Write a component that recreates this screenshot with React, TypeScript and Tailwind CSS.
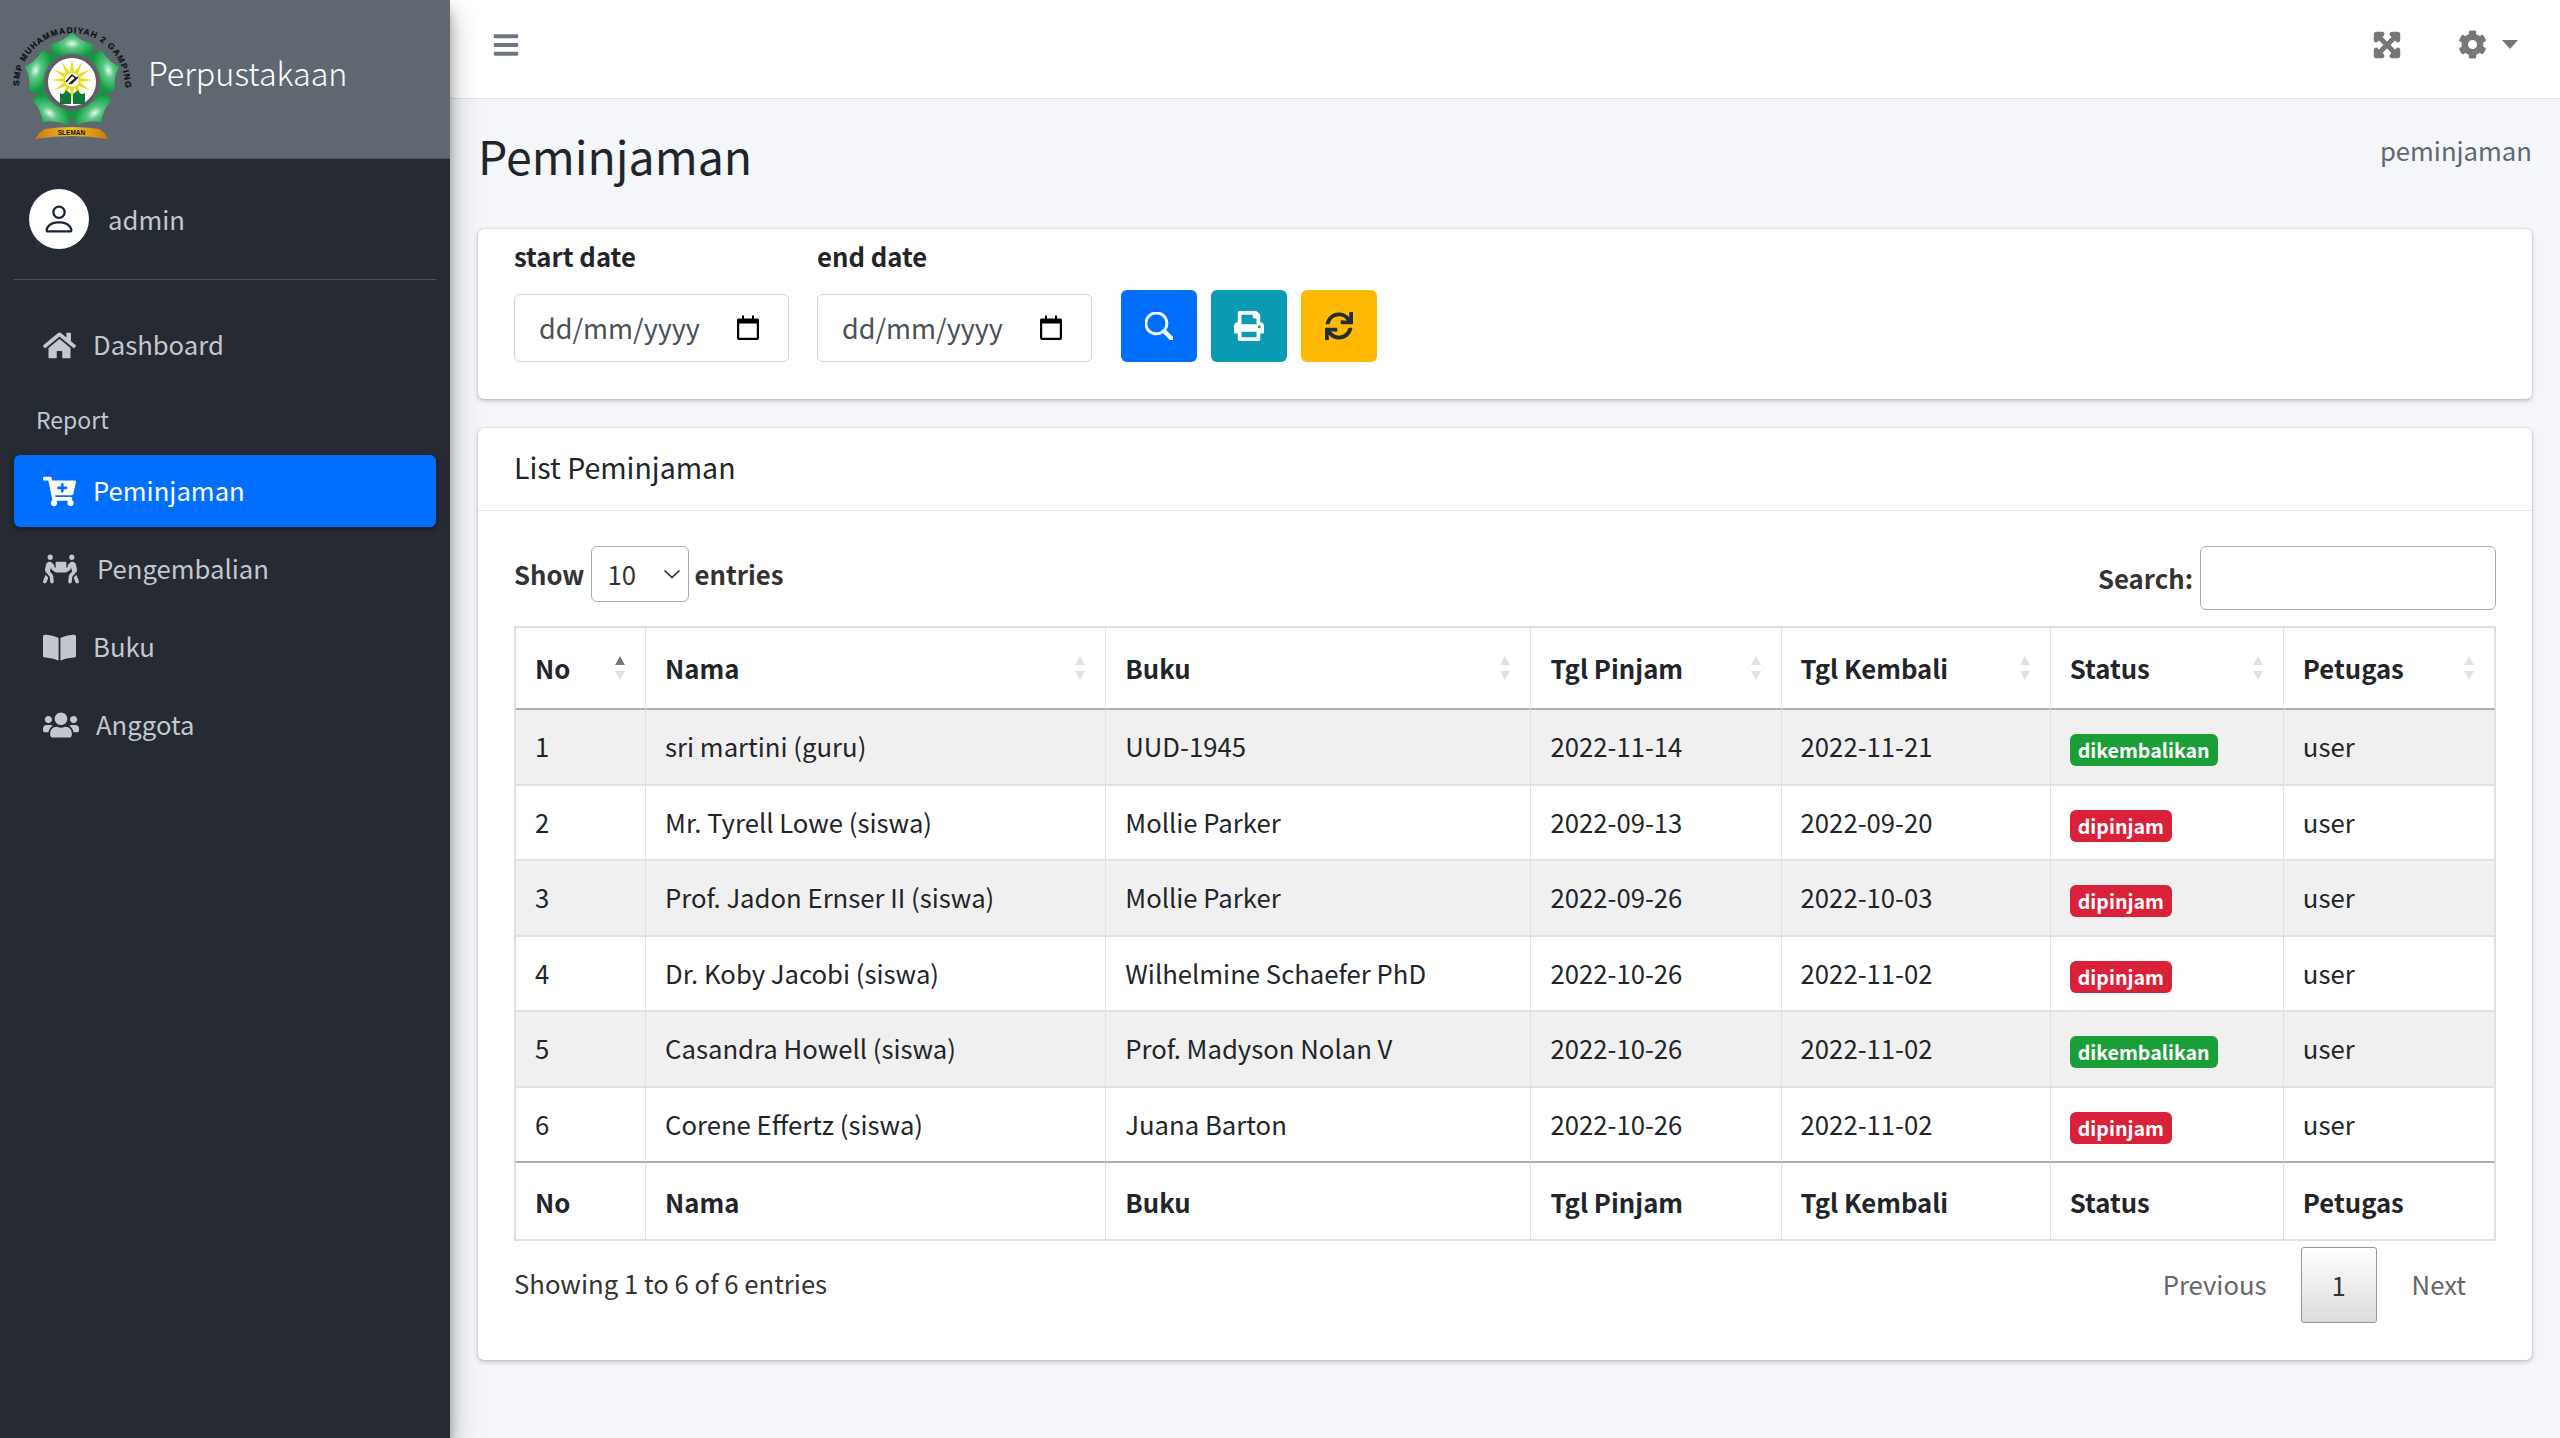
import React from 'react';
import { FaHome, FaCartPlus, FaPeopleCarry, FaBookOpen, FaUsers, FaExpandArrowsAlt, FaCog, FaBars, FaPrint, FaSync } from 'react-icons/fa';
import { BsPerson, BsSearch } from 'react-icons/bs';

const sun = (() => {
  const pts: string[] = [];
  for (let i = 0; i < 24; i++) {
    const r = i % 2 === 0 ? 21 : 8;
    const a = (i * Math.PI) / 12 - Math.PI / 2;
    pts.push(`${(72 + r * Math.cos(a)).toFixed(1)},${(76 + r * Math.sin(a)).toFixed(1)}`);
  }
  return pts.join(' ');
})();

function Logo() {
  return (
    <svg width="150" height="150" viewBox="0 0 150 150" className="shrink-0">
      <defs>
        <radialGradient id="petal" cx="50%" cy="45%" r="55%">
          <stop offset="0%" stopColor="#e6f8ec" />
          <stop offset="35%" stopColor="#5ac884" />
          <stop offset="100%" stopColor="#0b9a3c" />
        </radialGradient>
        <linearGradient id="gold" x1="0" x2="1" y1="0" y2="0">
          <stop offset="0%" stopColor="#c97a08" />
          <stop offset="50%" stopColor="#f3c02a" />
          <stop offset="100%" stopColor="#c97a08" />
        </linearGradient>
        <path id="arc" d="M19 82 A53 53 0 0 1 125 82" />
      </defs>
      {[0, 72, 144, 216, 288].map((a) => (
        <path key={a} transform={`rotate(${a} 72 78)`} fill="url(#petal)" d="M72 28 Q79 37 93 40 Q95 49 88 54 Q72 45 56 54 Q49 49 51 40 Q65 37 72 28Z" />
      ))}
      <circle cx="72" cy="78" r="27" fill="#5d5d5d" />
      <circle cx="72" cy="78" r="24" fill="#ffffff" />
      <polygon points={sun} fill="#e8dc1e" />
      <circle cx="72" cy="76" r="7" fill="#ffffff" />
      <path d="M66 78 L72 71 L76 74 L69 80 M71 80 L78 73" stroke="#222222" strokeWidth="1.6" fill="none" />
      <path d="M60 100 V89 Q64 92 66 86 L71 90 V100Z M73 100 V90 L78 86 Q80 92 85 89 V100Z" fill="#0f7a3c" />
      <path d="M35 135 Q40 127 45 125 Q72 121 99 125 Q104 127 108 135 Q72 129 35 135Z" fill="url(#gold)" />
      <text x="71.5" y="131" textAnchor="middle" fontSize="6.5" fontWeight="700" fill="#111111" fontFamily="Liberation Sans, sans-serif">SLEMAN</text>
      <text fontSize="8.4" fontWeight="700" fill="#111111" stroke="#111111" strokeWidth="0.25" fontFamily="Liberation Sans, sans-serif">
        <textPath href="#arc" textLength="168" lengthAdjust="spacing">SMP MUHAMMADIYAH 2 GAMPING</textPath>
      </text>
    </svg>
  );
}

function Calendar() {
  return (
    <svg width="22" height="25" viewBox="0 0 22 25" className="shrink-0">
      <path d="M1.5 3.5 H5 V0.5 H7 V3.5 H15 V0.5 H17 V3.5 H20.5 A1.5 1.5 0 0 1 22 5 V23 A2 2 0 0 1 20 25 H2 A2 2 0 0 1 0 23 V5 A1.5 1.5 0 0 1 1.5 3.5Z M2.2 8.5 V22.8 H19.8 V8.5Z" fill="#000000" fillRule="evenodd" />
    </svg>
  );
}

function DateField() {
  return (
    <div className="h-[68px] w-[275px] flex items-center justify-between pl-[24px] pr-[29px] pb-[2px] bg-white border border-[#ced4da] rounded-[6px] text-[#495057] text-[27px] leading-none">
      <span>dd/mm/yyyy</span>
      <Calendar />
    </div>
  );
}

function NavItem({ icon, label, gap = 'w-[50px]', active = false }: { icon: React.ReactNode; label: string; gap?: string; active?: boolean }) {
  return (
    <a className={`flex items-center h-[72px] pl-[29px] rounded-[6px] mx-[14px] ${active ? 'bg-[#006fff] text-white shadow-[0_2px_5px_rgba(0,0,0,0.4)]' : 'text-[#c2c7d0]'}`}>
      <span className={`${gap} shrink-0 flex items-center`}>{icon}</span>
      <span className="text-[25.7px] leading-none pb-[3px]">{label}</span>
    </a>
  );
}

function Sort({ active = false }: { active?: boolean }) {
  return (
    <span className="absolute right-[20px] top-[28px] flex flex-col gap-[6px]">
      <span className={`w-0 h-0 border-l-[5px] border-r-[5px] border-b-[9px] border-l-transparent border-r-transparent ${active ? 'border-b-[#777777]' : 'border-b-[#e2e2e2]'}`} />
      <span className="w-0 h-0 border-l-[5px] border-r-[5px] border-t-[9px] border-l-transparent border-r-transparent border-t-[#e2e2e2]" />
    </span>
  );
}

const heads = ['No', 'Nama', 'Buku', 'Tgl Pinjam', 'Tgl Kembali', 'Status', 'Petugas'];
const rows = [
  ['1', 'sri martini (guru)', 'UUD-1945', '2022-11-14', '2022-11-21', 'dikembalikan'],
  ['2', 'Mr. Tyrell Lowe (siswa)', 'Mollie Parker', '2022-09-13', '2022-09-20', 'dipinjam'],
  ['3', 'Prof. Jadon Ernser II (siswa)', 'Mollie Parker', '2022-09-26', '2022-10-03', 'dipinjam'],
  ['4', 'Dr. Koby Jacobi (siswa)', 'Wilhelmine Schaefer PhD', '2022-10-26', '2022-11-02', 'dipinjam'],
  ['5', 'Casandra Howell (siswa)', 'Prof. Madyson Nolan V', '2022-10-26', '2022-11-02', 'dikembalikan'],
  ['6', 'Corene Effertz (siswa)', 'Juana Barton', '2022-10-26', '2022-11-02', 'dipinjam'],
];

export default function App() {
  return (
    <div className="flex min-h-screen bg-[#f4f6f9] text-[#212529] font-['Noto_Sans_CJK_SC',sans-serif] overflow-hidden">
      <aside className="w-[450px] shrink-0 bg-[#262a32] shadow-[0_14px_28px_rgba(0,0,0,0.3),0_10px_10px_rgba(0,0,0,0.25)] z-10">
        <div className="h-[159px] bg-[#5f6871] border-b border-[#4b545c] flex items-center overflow-hidden">
          <Logo />
          <span className="text-[32.3px] leading-none font-light text-white -ml-[2px] mt-[-14px]">Perpustakaan</span>
        </div>
        <div className="mx-[14px] h-[121px] border-b border-[#4b545c] flex items-center pl-[15px]">
          <span className="w-[60px] h-[60px] rounded-full bg-white flex items-center justify-center text-[#14233a]">
            <BsPerson size={36} />
          </span>
          <span className="ml-[19px] text-[25.7px] leading-none text-[#c2c7d0]">admin</span>
        </div>
        <nav className="pt-[29px]">
          <NavItem icon={<FaHome size={33} />} label="Dashboard" />
          <div className="h-[54px] mt-[11px] pl-[36px] flex items-center text-[23px] leading-none text-[#c2c7d0]">Report</div>
          <div className="mt-[9px] flex flex-col gap-[6px]">
            <NavItem active icon={<FaCartPlus size={33} />} label="Peminjaman" />
            <NavItem gap="w-[54px]" icon={<FaPeopleCarry size={36} />} label="Pengembalian" />
            <NavItem icon={<FaBookOpen size={33} />} label="Buku" />
            <NavItem gap="w-[53px]" icon={<FaUsers size={36} />} label="Anggota" />
          </div>
        </nav>
      </aside>

      <main className="flex-1 min-w-0">
        <header className="h-[99px] bg-white border-b border-[#dee2e6] flex items-center justify-between pb-[9px] pl-[42px] pr-[42px] text-[#777777]">
          <FaBars size={28} className="text-[#6c757d]" />
          <div className="flex items-center">
            <FaExpandArrowsAlt size={28} stroke="currentColor" strokeWidth={35} />
            <FaCog size={29} className="ml-[57px]" />
            <span className="ml-[15px] w-0 h-0 border-l-[8px] border-r-[8px] border-t-[9px] border-l-transparent border-r-transparent border-t-[#777777]" />
          </div>
        </header>

        <div className="px-[28px] pt-[24px]">
          <div className="flex items-start justify-between h-[106px]">
            <h1 className="text-[46.4px] leading-[64px] font-normal">Peminjaman</h1>
            <span className="text-[25.7px] leading-[54px] text-[#5f6871]">peminjaman</span>
          </div>

          <section className="h-[170px] bg-white rounded-[6px] shadow-[0_0_2px_rgba(0,0,0,0.2),0_2px_5px_rgba(0,0,0,0.2)] px-[36px] flex items-start gap-[28px]">
            <div>
              <div className="pt-[10px] h-[65px] text-[25.7px] leading-[34px] font-bold">start date</div>
              <DateField />
            </div>
            <div>
              <div className="pt-[10px] h-[65px] text-[25.7px] leading-[34px] font-bold">end date</div>
              <DateField />
            </div>
            <div className="mt-[61px] ml-[1px] flex gap-[14px]">
              <button className="w-[76px] h-[72px] rounded-[6px] bg-[#006fff] text-white flex items-center justify-center"><BsSearch size={28} strokeWidth={0.6} stroke="currentColor" /></button>
              <button className="w-[76px] h-[72px] rounded-[6px] bg-[#0a9ab3] text-white flex items-center justify-center"><FaPrint size={30} /></button>
              <button className="w-[76px] h-[72px] rounded-[6px] bg-[#ffb900] text-[#1f2d3d] flex items-center justify-center"><FaSync size={28} /></button>
            </div>
          </section>

          <section className="mt-[29px] h-[932px] bg-white rounded-[6px] shadow-[0_0_2px_rgba(0,0,0,0.2),0_2px_5px_rgba(0,0,0,0.2)]">
            <div className="h-[83px] pb-[3px] border-b border-[#e3e6ea] px-[36px] flex items-center text-[28.5px] leading-none">List Peminjaman</div>
            <div className="px-[36px]">
              <div className="h-[115px] flex justify-between pt-[35px] font-bold text-[#333333] text-[25.7px] leading-none">
                <div className="h-[56px] flex items-center">
                  <span>Show</span>
                  <div className="relative mx-[6px]">
                    <select className="block appearance-none w-[98px] h-[56px] pl-[16px] bg-white border border-[#aaaaaa] rounded-[6px] font-normal text-[25.7px]" defaultValue="10">
                      <option value="10">10</option>
                    </select>
                    <svg width="18" height="10" viewBox="0 0 18 10" className="absolute right-[8px] top-[23px] pointer-events-none" fill="none" stroke="#222222" strokeWidth="1.6"><path d="M1.5 1.5 L9 8.5 L16.5 1.5" /></svg>
                  </div>
                  <span>entries</span>
                </div>
                <div className="h-[64px] flex items-center">
                  <span>Search:</span>
                  <input className="ml-[7px] w-[296px] h-[64px] bg-white border border-[#aaaaaa] rounded-[6px]" />
                </div>
              </div>
              <table className="w-full table-fixed border-separate border-spacing-0 border border-[#dee2e6] text-[25.7px]">
                <colgroup>
                  <col className="w-[131px]" /><col className="w-[460px]" /><col className="w-[425px]" /><col className="w-[250px]" /><col className="w-[269px]" /><col className="w-[233px]" /><col className="w-[211px]" />
                </colgroup>
                <thead>
                  <tr>
                    {heads.map((h, i) => (
                      <th key={h} className={`relative h-[83px] pl-[19px] text-left font-bold border-[#dee2e6] border-t border-r border-b-2 border-b-[#a9afb5] ${i === 0 ? 'border-l' : ''}`}>
                        {h}
                        <Sort active={i === 0} />
                      </th>
                    ))}
                  </tr>
                </thead>
                <tbody>
                  {rows.map((r, ri) => (
                    <tr key={r[0]} className={ri % 2 === 0 ? 'bg-[#f0f0f0]' : 'bg-white'}>
                      {r.map((c, i) => (
                        <td key={i} className={`h-[75.5px] pl-[19px] border-[#dee2e6] border-r ${ri === rows.length - 1 ? 'border-b-2 border-b-[#a9afb5]' : 'border-b-2'} ${i === 0 ? 'border-l' : ''}`}>
                          {i === 5 ? (
                            <span className={`inline-flex items-center h-[32px] px-[8px] rounded-[6px] text-white font-bold text-[19.6px] leading-none align-middle ${c === 'dipinjam' ? 'bg-[#d9223a]' : 'bg-[#1a9e38]'}`}>{c}</span>
                          ) : c}
                        </td>
                      ))}
                      <td className={`h-[75.5px] pl-[19px] border-[#dee2e6] border-r ${ri === rows.length - 1 ? 'border-b-2 border-b-[#a9afb5]' : 'border-b-2'}`}>user</td>
                    </tr>
                  ))}
                </tbody>
                <tfoot>
                  <tr>
                    {heads.map((h, i) => (
                      <th key={h} className={`h-[77px] pl-[19px] pt-[3px] text-left font-bold border-[#dee2e6] border-r border-b ${i === 0 ? 'border-l' : ''}`}>{h}</th>
                    ))}
                  </tr>
                </tfoot>
              </table>
              <div className="flex justify-between mt-[6px]">
                <div className="mt-[6px] h-[60px] flex items-center text-[25.7px] leading-none text-[#333333]">Showing 1 to 6 of 6 entries</div>
                <div className="flex items-center text-[25.7px] leading-none text-[#666666] pr-[30px]">
                  <span className="pb-[2px]">Previous</span>
                  <span className="ml-[34px] w-[76px] h-[76px] flex items-center justify-center rounded-[3px] border border-[#979797] text-[#333333] bg-gradient-to-b from-white to-[#dcdcdc]">1</span>
                  <span className="ml-[35px] pb-[2px]">Next</span>
                </div>
              </div>
            </div>
          </section>
        </div>
      </main>
    </div>
  );
}
